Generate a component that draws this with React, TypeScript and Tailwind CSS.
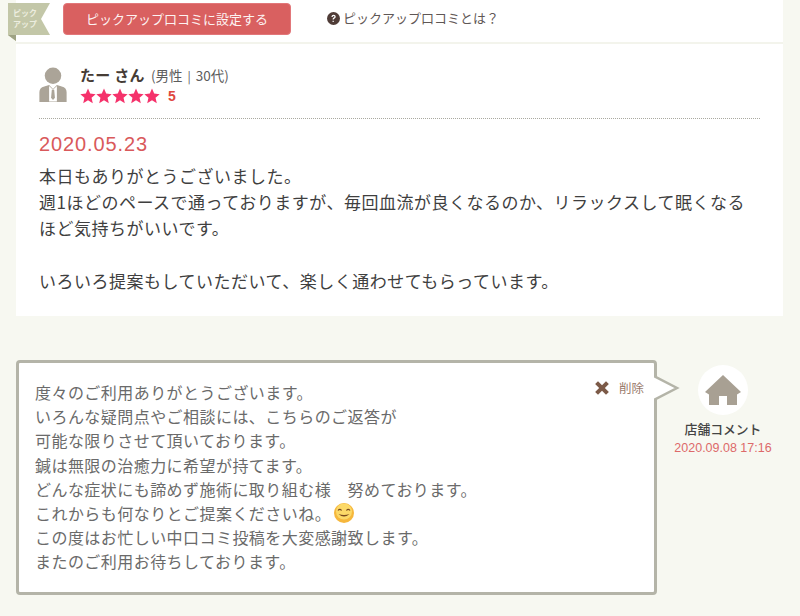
const font = { fontFamily: '"Noto Sans CJK JP", sans-serif' };
const latin = { fontFamily: '"Liberation Sans", sans-serif' };

function Stars() {
  return (
    <div className="flex">
      {[0, 1, 2, 3, 4].map((i) => (
        <svg key={i} viewBox="0 0 24 24" className="h-[16px] w-[16px] fill-[#f5326b]">
          <path d="M12 .8l3.300 7.600 8.200.8-6.200 5.400 1.900 8.100L12 18.400l-7.200 4.300 1.900-8.100L.5 9.200l8.200-.8z" />
        </svg>
      ))}
    </div>
  );
}

function UserIcon() {
  return (
    <svg viewBox="0 0 28 36" className="h-[35px] w-[28px]">
      <circle cx="14" cy="9" r="8.500" fill="#aba498" />
      <path d="M0 36V26q0-5 5-6l5-1.500 4 4 4-4 5 1.500q5 1 5 6v10z" fill="#aba498" />
      <path d="M10 19.500l4 4 4-4v16h-8z" fill="#fff" />
      <path d="M12.800 23.500h2.400l.8 8-2 2.500-2-2.500z" fill="#aba498" />
    </svg>
  );
}

function Smile() {
  return (
    <svg viewBox="0 0 20 20" className="ml-[-1px] inline-block h-[20px] w-[20px] align-[-3px]">
      <circle cx="10" cy="10" r="10" fill="#f6b73c" />
      <circle cx="10" cy="8.500" r="8" fill="#fcd968" />
      <path d="M4 7.500q1.800-2.400 3.600 0M12.400 7.500q1.800-2.400 3.600 0" fill="none" stroke="#7a4a1e" strokeWidth="1.200" />
      <path d="M4.500 11q5.500 5 11 0q-5.500 2-11 0z" fill="#7a4a1e" />
    </svg>
  );
}

export default function App() {
  return (
    <div className="h-[616px] w-[800px] overflow-hidden bg-[#f7f8f1] text-[#4a4a4a]" style={font}>
      <div className="relative mx-4 w-[767px] bg-white">
        {/* ribbon */}
        <div className="absolute left-[-8px] top-[3px]">
          <svg viewBox="0 0 42 38" className="h-[38px] w-[42px]">
            <path d="M0 0h42l-9 16 9 16H8v6l-8-6z" fill="#c3c7a8" />
            <path d="M0 32h8v6z" fill="#9ea283" />
          </svg>
          <div className="absolute left-[5px] top-[4px] w-[30px] text-[8px] leading-[11px] font-bold text-[#eceddf]">
            ピック<br />アップ
          </div>
        </div>

        <div className="flex h-[44px] items-start border-b-2 border-[#f3f4ec] pl-[47px]">
          <div className="mt-[3px] flex h-[32px] w-[228px] items-center justify-center rounded-[4px] border border-[#e2777a] bg-[#d96060] text-[13px] text-[#fdf3f2]">
            ピックアップ口コミに設定する
          </div>
          <div className="ml-[36px] mt-[9px] flex items-center gap-[3px] text-[13px] leading-[18px] text-[#5f5755]">
            <svg viewBox="0 0 14 14" className="h-[13px] w-[13px]">
              <circle cx="7" cy="7" r="7" fill="#4f3c37" />
              <path d="M4.700 5.300q.2-2.300 2.400-2.300 2.300 0 2.300 2 0 1.200-1.200 1.900-.9.5-.9 1.300H6q0-1.500 1.100-2.200.9-.5.9-1 0-.8-.9-.8-.9 0-1 1.100z M6 9.300h1.300v1.500H6z" fill="#fff" />
            </svg>
            ピックアップ口コミとは？
          </div>
        </div>

        <div className="px-[23px] pb-[22px] pt-[23px]">
          <div className="flex items-start gap-[13px] border-b border-dotted border-[#a9a9a0] pb-[14px]">
            <UserIcon />
            <div className="-mt-[2px]">
              <div className="flex items-baseline gap-[6px] leading-[20px]">
                <span className="text-[15px] font-bold tracking-[0.3px] text-[#463c35]">たー さん</span>
                <span className="text-[13.500px] text-[#5c5c5c]">(男性<span className="mx-[5px] text-[12px]">|</span>30代)</span>
              </div>
              <div className="mt-[2px] flex items-center gap-[8px] leading-[16px]">
                <Stars />
                <span className="text-[14px] font-bold text-[#e0483e]" style={latin}>5</span>
              </div>
            </div>
          </div>
          <div className="mt-[12px] text-[20px] leading-[26px] tracking-[0.9px] text-[#d9595b]" style={latin}>
            2020.05.23
          </div>
          <p className="mt-[6px] text-[17px] leading-[26.200px] tracking-[0.5px] text-[#3f3f3f]">
            本日もありがとうございました。
            <br />
            週1ほどのペースで通っておりますが、毎回血流が良くなるのか、リラックスして眠くなるほど気持ちがいいです。
            <br />
            <br />
            いろいろ提案もしていただいて、楽しく通わせてもらっています。
          </p>
        </div>
      </div>

      <div className="mt-[44px] flex items-start pl-4">
        <div className="relative h-[235px] w-[641px] rounded-[4px] border-[3px] border-[#b4b4a8] bg-white px-[16px] pt-[17px] text-[16px] leading-[24.200px] tracking-[0.45px] text-[#6a6a6a]">
          <p>
            度々のご利用ありがとうございます。
            <br />
            いろんな疑問点やご相談には、こちらのご返答が
            <br />
            可能な限りさせて頂いております。
            <br />
            鍼は無限の治癒力に希望が持てます。
            <br />
            どんな症状にも諦めず施術に取り組む様　努めております。
            <br />
            これからも何なりとご提案くださいね。 <Smile />
            <br />
            この度はお忙しい中口コミ投稿を大変感謝致します。
            <br />
            またのご利用お待ちしております。
          </p>
          <div className="absolute right-[10px] top-[15px] flex items-center gap-[9px] text-[12.500px] leading-[20px] tracking-normal text-[#9a7b6c]">
            <svg viewBox="0 0 14 14" className="h-[16px] w-[16px]">
              <path d="M1 3.500L3.500 1 7 4.500 10.500 1 13 3.500 9.500 7 13 10.500 10.500 13 7 9.500 3.500 13 1 10.500 4.500 7z" fill="#7c5a48" />
            </svg>
            削除
          </div>
          {/* speech arrow */}
          <svg viewBox="0 0 26 30" className="absolute left-[635px] top-[10px] h-[30px] w-[26px]">
            <path d="M0 3l23 12L0 27z" fill="#fff" />
            <path d="M0 3l23 12L0 27" fill="none" stroke="#b4b4a8" strokeWidth="2.500" />
          </svg>
        </div>
        <div className="ml-[16px] mt-[5px] flex w-[100px] flex-col items-center">
          <div className="flex h-[50px] w-[50px] items-center justify-center rounded-full bg-white">
            <svg viewBox="0 0 36 30" className="h-[30px] w-[36px]">
              <path d="M18 0L36 17 32 19.500V30H22V21H14V30H4V19.500L0 17z" fill="#a8a093" />
            </svg>
          </div>
          <div className="mt-[6px] text-[12.800px] font-medium leading-[16px] text-[#444]">店舗コメント</div>
          <div className="mt-[4px] whitespace-nowrap text-[12.500px] leading-[14px] text-[#dd6a6a]" style={latin}>
            2020.09.08 17:16
          </div>
        </div>
      </div>
    </div>
  );
}
